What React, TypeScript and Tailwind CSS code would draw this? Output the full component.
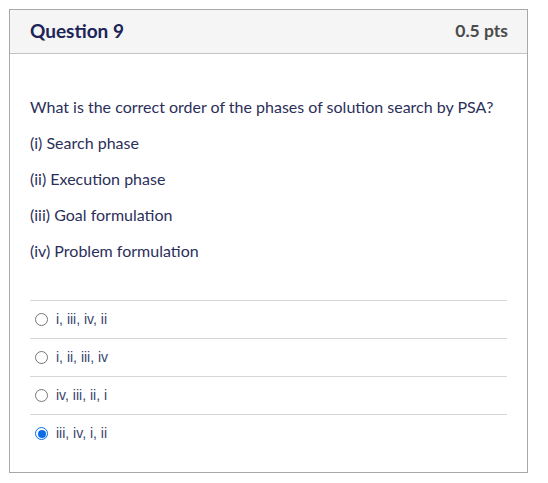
const answers = [
  { id: 'a', label: 'i, iii, iv, ii' },
  { id: 'b', label: 'i, ii, iii, iv' },
  { id: 'c', label: 'iv, iii, ii, i' },
  { id: 'd', label: 'iii, iv, i, ii' },
];

const phases = ['(i) Search phase', '(ii) Execution phase', '(iii) Goal formulation', '(iv) Problem formulation'];

function Radio({ checked }: { checked: boolean }) {
  if (checked) {
    return (
      <span className="flex h-[13px] w-[13px] items-center justify-center rounded-full border-[1.5px] border-[#0b6ee8] bg-white">
        <span className="h-[8px] w-[8px] rounded-full bg-[#0b6ee8]" />
      </span>
    );
  }
  return <span className="h-[13px] w-[13px] rounded-full border border-[#767676] bg-white" />;
}

export default function App() {
  const selected = 'd';
  return (
    <div className="min-h-[483px] w-[548px] bg-white pl-[9px] pt-[9px] font-['Lato','Liberation_Sans',sans-serif]">
      <div className="flex h-[464px] w-[519px] flex-col border border-[#a8a8a8]">
        <div className="flex h-[44px] items-center justify-between border-b border-[#c4c4c4] bg-[#f5f5f5] pl-[20px] pr-[19px]">
          <h2 className="text-[19px] font-bold text-[#1c2458]">Question 9</h2>
          <span className="text-[17.5px] font-bold text-[#4b4b4b]">0.5 pts</span>
        </div>

        <div className="flex flex-col px-[20px] pt-[43px]">
          <div className="flex flex-col gap-[16px] text-[16px] leading-[20px] text-[#2c2f5a]">
            <p>What is the correct order of the phases of solution search by PSA?</p>
            {phases.map((p) => (
              <p key={p}>{p}</p>
            ))}
          </div>

          <div className="mt-[39px] flex flex-col">
            {answers.map((a) => (
              <label
                key={a.id}
                className="flex h-[38px] items-center gap-[8px] border-t border-[#d6d6d6] pl-[5px] font-['Liberation_Sans',sans-serif] text-[14px] text-[#3b3f6b]"
              >
                <Radio checked={a.id === selected} />
                <span>{a.label}</span>
              </label>
            ))}
          </div>
        </div>
      </div>
    </div>
  );
}
